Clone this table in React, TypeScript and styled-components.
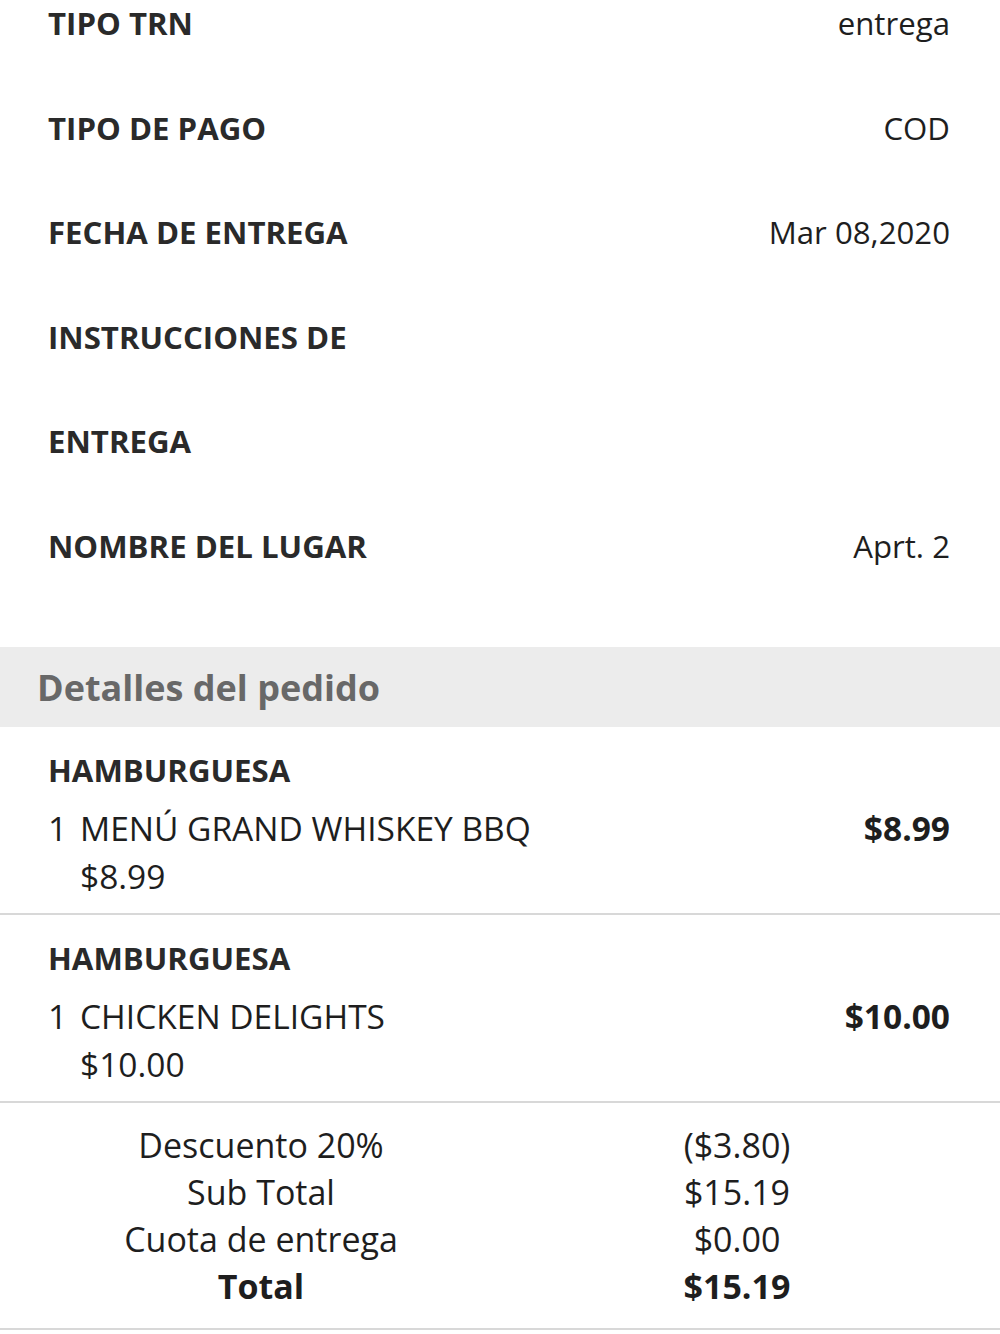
import React from 'react';
import styled, { createGlobalStyle } from 'styled-components';

const GlobalStyle = createGlobalStyle`
  html, body {
    margin: 0;
    padding: 0;
    background: #fff;
  }
  body {
    font-family: 'Open Sans', 'Noto Sans', 'Liberation Sans', sans-serif;
    color: #222;
  }
`;

const info = [
  { label: 'TIPO TRN', value: 'entrega' },
  { label: 'TIPO DE PAGO', value: 'COD' },
  { label: 'FECHA DE ENTREGA', value: 'Mar 08,2020' },
  { label: 'INSTRUCCIONES DE ENTREGA', value: '' },
  { label: 'NOMBRE DEL LUGAR', value: 'Aprt. 2' },
];

const items = [
  { category: 'HAMBURGUESA', qty: 1, name: 'MENÚ GRAND WHISKEY BBQ', unit: '$8.99', total: '$8.99' },
  { category: 'HAMBURGUESA', qty: 1, name: 'CHICKEN DELIGHTS', unit: '$10.00', total: '$10.00' },
];

const summary = [
  { label: 'Descuento 20%', value: '($3.80)' },
  { label: 'Sub Total', value: '$15.19' },
  { label: 'Cuota de entrega', value: '$0.00' },
  { label: 'Total', value: '$15.19', strong: true },
];

export default function App() {
  return (
    <Page>
      <GlobalStyle />
      <InfoList>
        {info.map((row) => (
          <InfoRow key={row.label}>
            <InfoLabel>{row.label}</InfoLabel>
            <InfoValue>{row.value}</InfoValue>
          </InfoRow>
        ))}
      </InfoList>

      <SectionHeader>Detalles del pedido</SectionHeader>

      {items.map((item) => (
        <Item key={item.name}>
          <Category>{item.category}</Category>
          <ProductRow>
            <Qty>{item.qty}</Qty>
            <ProductName>{item.name}</ProductName>
            <ProductTotal>{item.total}</ProductTotal>
          </ProductRow>
          <UnitPrice>{item.unit}</UnitPrice>
        </Item>
      ))}

      <Summary>
        {summary.map((row) => (
          <React.Fragment key={row.label}>
            <SummaryCell $strong={row.strong}>{row.label}</SummaryCell>
            <SummaryCell $strong={row.strong}>{row.value}</SummaryCell>
          </React.Fragment>
        ))}
      </Summary>
    </Page>
  );
}

const Page = styled.div`
  width: 1000px;
  margin-top: -29px;
`;

const InfoList = styled.div`
  padding: 0 50px 0 48px;
  margin-bottom: 49px;
`;

const InfoRow = styled.div`
  display: flex;
  justify-content: space-between;
  align-items: flex-start;
  font-size: 31.2px;
  line-height: 104.5px;
`;

const InfoLabel = styled.div`
  width: 420px;
  font-weight: 700;
  color: #2a2a2a;
`;

const InfoValue = styled.div`
  color: #1e1e1e;
  text-align: right;
`;

const SectionHeader = styled.div`
  height: 80px;
  display: flex;
  align-items: center;
  padding-left: 37px;
  background: #ececec;
  color: #686868;
  font-size: 36px;
  font-weight: 700;
`;

const Item = styled.div`
  padding: 19px 50px 13px 48px;
  border-bottom: 2px solid #d8d8d8;
  font-size: 33.5px;
  line-height: 48px;
  color: #1e1e1e;
`;

const Category = styled.div`
  font-size: 31.2px;
  font-weight: 700;
  color: #2a2a2a;
  margin-bottom: 10px;
`;

const ProductRow = styled.div`
  display: flex;
  align-items: baseline;
`;

const Qty = styled.span`
  width: 32px;
`;

const ProductName = styled.span`
  flex: 1;
`;

const ProductTotal = styled.span`
  font-weight: 700;
`;

const UnitPrice = styled.div`
  padding-left: 32px;
`;

const Summary = styled.div`
  display: grid;
  grid-template-columns: 476px 476px;
  padding: 19px 0 18px 23px;
  border-bottom: 2px solid #d8d8d8;
`;

const SummaryCell = styled.div<{ $strong?: boolean }>`
  text-align: center;
  font-size: 34px;
  line-height: 47px;
  color: #1e1e1e;
  font-weight: ${(p) => (p.$strong ? 700 : 400)};
`;
